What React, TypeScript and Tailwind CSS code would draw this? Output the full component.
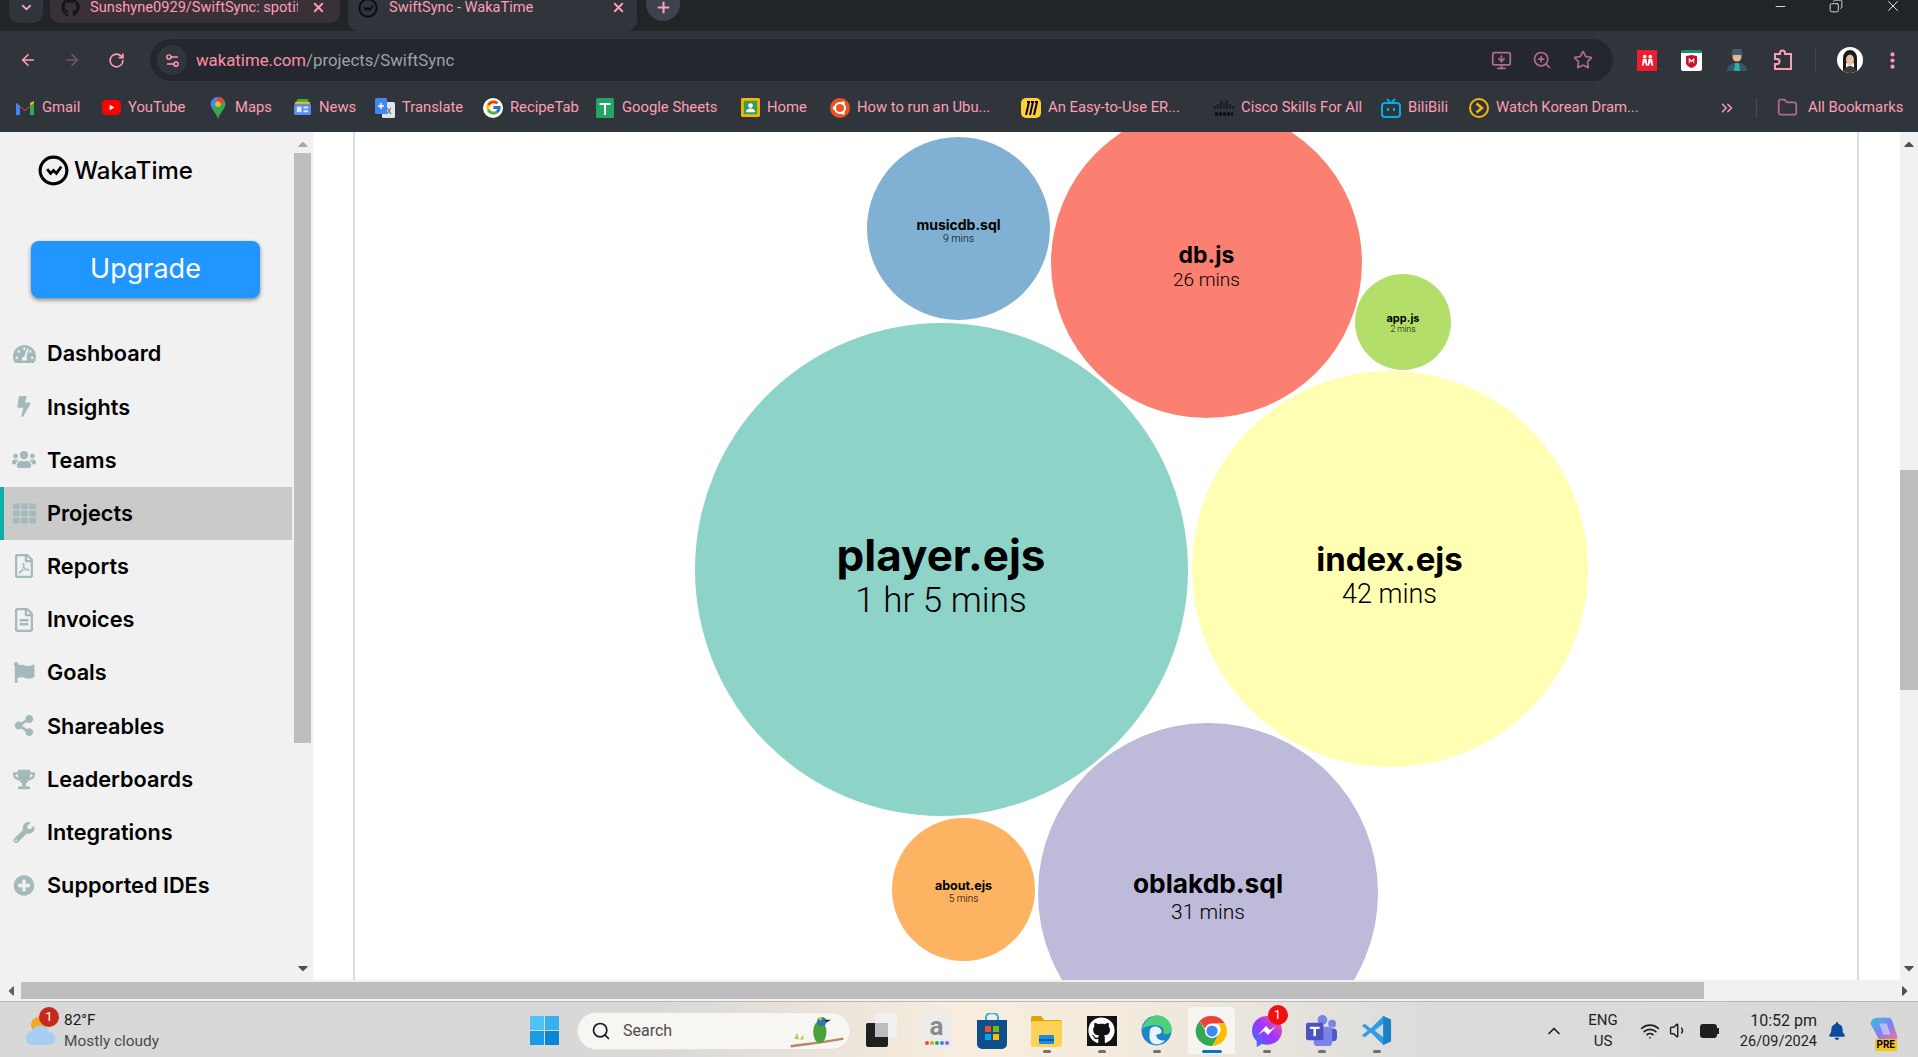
import {
  ArrowLeft,
  ArrowRight,
  RotateCw,
  Settings2,
  ZoomIn,
  Star,
  EllipsisVertical,
  Folder,
  ChevronsRight,
  ChevronDown,
  ChevronUp,
  X,
  Plus,
  Minus,
  Search,
  Wifi,
  Volume1,
  MonitorDown,
  Copy,
} from "lucide-react"
import { FcGoogle } from "react-icons/fc"
import {
  FaTachometerAlt,
  FaBolt,
  FaUsers,
  FaTh,
  FaRegFilePdf,
  FaRegFileAlt,
  FaFlag,
  FaShareAlt,
  FaTrophy,
  FaWrench,
  FaPlusCircle,
  FaGithub,
  FaBell,
  FaCaretUp,
  FaCaretDown,
  FaCaretLeft,
  FaCaretRight,
} from "react-icons/fa"

function WakaLogo({ className }: { className: string }) {
  return (
    <svg viewBox="0 0 32 32" className={className} fill="none" stroke="currentColor">
      <circle cx="16" cy="16" r="13.8" strokeWidth="3.2" />
      <path d="M9.5 14.5l3.5 4.5 3-3 3 3 5-7" strokeWidth="2.8" />
    </svg>
  )
}

function ChromeIcon({ className }: { className: string }) {
  return (
    <svg viewBox="0 0 48 48" className={className}>
      <path d="M24 4a20 20 0 0 1 17.3 10H24a10 10 0 0 0-9.4 6.6L7.6 10.5A20 20 0 0 1 24 4z" fill="#ea4335" />
      <path d="M41.3 14A20 20 0 0 1 24 44l8.7-15a10 10 0 0 0-.6-15z" fill="#fbbc04" />
      <path d="M7.6 10.5l8.7 15A10 10 0 0 0 32.7 29L24 44A20 20 0 0 1 7.6 10.5z" fill="#34a853" />
      <circle cx="24" cy="24" r="9.5" fill="#fff" />
      <circle cx="24" cy="24" r="7.5" fill="#4285f4" />
    </svg>
  )
}

const bookmarks = [
  {
    label: "Gmail",
    width: "w-[86px]",
    icon: (
      <svg viewBox="0 0 20 16" className="h-[16px] w-[20px]">
        <path d="M1 15V3l9 7 9-7v12h-4V7l-5 4-5-4v8z" fill="#ea4335" />
        <path d="M1 15V3l4 3v9z" fill="#4285f4" />
        <path d="M15 15V6l4-3v12z" fill="#34a853" />
        <path d="M15 6l4-3V1l-4 2z" fill="#fbbc04" />
      </svg>
    ),
  },
  {
    label: "YouTube",
    width: "w-[107px]",
    icon: (
      <svg viewBox="0 0 20 18" className="h-[17px] w-[19px]">
        <rect x="0" y="1" width="20" height="16" rx="4.5" fill="#ff0000" />
        <path d="M8 6l5 3-5 3z" fill="#fff" />
      </svg>
    ),
  },
  {
    label: "Maps",
    width: "w-[84px]",
    icon: (
      <svg viewBox="0 0 16 24" className="h-[22px] w-[16px]">
        <path d="M8 0a8 8 0 0 1 8 8c0 5-6 9-8 16C6 17 0 13 0 8a8 8 0 0 1 8-8z" fill="#34a853" />
        <path d="M8 0a8 8 0 0 1 6 2.7L3 13C1 11 0 9.500 0 8a8 8 0 0 1 8-8z" fill="#4285f4" />
        <path d="M8 0a8 8 0 0 1 7 4l-4 4-5-6z" fill="#ea4335" />
        <circle cx="8" cy="8" r="3" fill="#fbbc04" />
      </svg>
    ),
  },
  {
    label: "News",
    width: "w-[83px]",
    icon: (
      <svg viewBox="0 0 18 18" className="h-[17px] w-[17px]">
        <rect x="3" y="0" width="12" height="6" rx="1" fill="#34a853" />
        <rect x="1" y="3" width="16" height="4" rx="1" fill="#fbbc04" />
        <rect x="0" y="5" width="18" height="12" rx="2" fill="#5b8def" />
        <rect x="3" y="8" width="5" height="6" fill="#dfe9fb" />
        <rect x="10" y="8" width="5" height="2" fill="#dfe9fb" />
        <rect x="10" y="12" width="5" height="2" fill="#dfe9fb" />
      </svg>
    ),
  },
  {
    label: "Translate",
    width: "w-[108px]",
    icon: (
      <svg viewBox="0 0 20 20" className="h-[20px] w-[20px]">
        <rect x="7" y="4" width="13" height="16" rx="1.5" fill="#dfe3ea" />
        <rect x="0" y="0" width="12" height="16" rx="1.5" fill="#4285f4" />
        <path d="M3 8h6M6 5v6" stroke="#fff" strokeWidth="1.5" />
        <path d="M12 10l4 6M16 10l-4 6" stroke="#6b7280" strokeWidth="1.2" />
      </svg>
    ),
  },
  { label: "RecipeTab", width: "w-[112px]", icon: <span className="flex h-[20px] w-[20px] items-center justify-center rounded-full bg-white"><FcGoogle className="h-[17px] w-[17px]" /></span> },
  {
    label: "Google Sheets",
    width: "w-[145px]",
    icon: (
      <svg viewBox="0 0 18 20" className="h-[20px] w-[18px]">
        <rect width="18" height="20" rx="1.5" fill="#23a566" />
        <path d="M3.500 6h11M9 6v11" stroke="#fff" strokeWidth="2" />
      </svg>
    ),
  },
  {
    label: "Home",
    width: "w-[90px]",
    icon: (
      <svg viewBox="0 0 20 20" className="h-[19px] w-[19px]">
        <rect width="20" height="20" rx="1.5" fill="#f4b400" />
        <rect x="3" y="3" width="14" height="14" fill="#2f9e60" />
        <circle cx="10" cy="8" r="2.500" fill="#fff" />
        <path d="M5 15a5 4 0 0 1 10 0z" fill="#fff" />
      </svg>
    ),
  },
  {
    label: "How to run an Ubu...",
    width: "w-[191px]",
    icon: (
      <svg viewBox="0 0 20 20" className="h-[20px] w-[20px]">
        <circle cx="10" cy="10" r="10" fill="#e95420" />
        <circle cx="10" cy="10" r="5" fill="none" stroke="#fff" strokeWidth="2" />
        <circle cx="4.500" cy="10" r="1.800" fill="#fff" />
        <circle cx="13" cy="5" r="1.800" fill="#fff" />
        <circle cx="13" cy="15" r="1.800" fill="#fff" />
      </svg>
    ),
  },
  {
    label: "An Easy-to-Use ER...",
    width: "w-[193px]",
    icon: (
      <svg viewBox="0 0 20 20" className="h-[20px] w-[20px]">
        <rect width="20" height="20" rx="5" fill="#ffd02f" />
        <path d="M6 4l2 0-3 13M10 4l2 0-3 13M14 4l2 0-3 13" stroke="#050038" strokeWidth="2" fill="none" />
      </svg>
    ),
  },
  {
    label: "Cisco Skills For All",
    width: "w-[167px]",
    icon: (
      <svg viewBox="0 0 20 20" className="h-[20px] w-[20px]" stroke="#0c0e10" strokeWidth="1.200">
        <path d="M1 8v3M4 6v5M7 2v9M10 4v7M13 2v9M16 6v5M19 8v3" />
        <path d="M1 16h18" strokeWidth="3.500" strokeDasharray="3 1" />
      </svg>
    ),
  },
  {
    label: "BiliBili",
    width: "w-[88px]",
    icon: (
      <svg viewBox="0 0 20 20" className="h-[20px] w-[20px]" fill="none" stroke="#00aeec" strokeWidth="2">
        <rect x="1" y="5" width="18" height="14" rx="3" />
        <path d="M6 1l3 3M14 1l-3 3M7 10v3M13 10v3" />
      </svg>
    ),
  },
  {
    label: "Watch Korean Dram...",
    width: "w-[200px]",
    icon: (
      <svg viewBox="0 0 20 20" className="h-[20px] w-[20px]" fill="none" stroke="#f5b50a" strokeWidth="2">
        <circle cx="10" cy="10" r="9" />
        <path d="M7.500 5.500L13 10l-5.500 4.500" strokeWidth="2.500" />
      </svg>
    ),
  },
]

const navItems = [
  { label: "Dashboard", icon: FaTachometerAlt, size: "h-[22px] w-[23px]", active: false },
  { label: "Insights", icon: FaBolt, size: "h-[21px] w-[22px]", active: false },
  { label: "Teams", icon: FaUsers, size: "h-[23px] w-[24px]", active: false },
  { label: "Projects", icon: FaTh, size: "h-[23px] w-[23px]", active: true },
  { label: "Reports", icon: FaRegFilePdf, size: "h-[24px] w-[22px]", active: false },
  { label: "Invoices", icon: FaRegFileAlt, size: "h-[24px] w-[22px]", active: false },
  { label: "Goals", icon: FaFlag, size: "h-[21px] w-[22px]", active: false },
  { label: "Shareables", icon: FaShareAlt, size: "h-[21px] w-[22px]", active: false },
  { label: "Leaderboards", icon: FaTrophy, size: "h-[21px] w-[22px]", active: false },
  { label: "Integrations", icon: FaWrench, size: "h-[21px] w-[22px]", active: false },
  { label: "Supported IDEs", icon: FaPlusCircle, size: "h-[21px] w-[22px]", active: false },
]

// bubble chart nodes, positions are relative to the page area
const bubbles = [
  {
    name: "player.ejs",
    time: "1 hr 5 mins",
    box: "left-[381.500px] top-[190.500px] h-[493px] w-[493px] bg-[#8dd3c7] pt-[14px]",
    nameClass: "text-[44px] leading-[50px]",
    timeClass: "text-[35px] leading-[42px]",
  },
  {
    name: "index.ejs",
    time: "42 mins",
    box: "left-[878.500px] top-[239px] h-[396px] w-[396px] bg-[#ffffb3] pt-[12px]",
    nameClass: "text-[33px] leading-[38px]",
    timeClass: "text-[27px] leading-[32px]",
  },
  {
    name: "db.js",
    time: "26 mins",
    box: "left-[738px] top-[-25px] h-[311px] w-[311px] bg-[#fb8072] pt-[8px]",
    nameClass: "text-[23px] leading-[26px]",
    timeClass: "text-[19px] leading-[23px]",
  },
  {
    name: "musicdb.sql",
    time: "9 mins",
    box: "left-[554px] top-[5px] h-[183px] w-[183px] bg-[#80b1d3] pt-[4px]",
    nameClass: "text-[14px] leading-[15px]",
    timeClass: "text-[10.500px] leading-[13px]",
  },
  {
    name: "app.js",
    time: "2 mins",
    box: "left-[1042px] top-[141.500px] h-[96px] w-[96px] bg-[#b3de69] pt-[2px]",
    nameClass: "text-[11px] leading-[12px]",
    timeClass: "text-[8.500px] leading-[10px]",
  },
  {
    name: "about.ejs",
    time: "5 mins",
    box: "left-[579px] top-[686px] h-[143px] w-[143px] bg-[#fdb462] pt-[4px]",
    nameClass: "text-[12.500px] leading-[14px]",
    timeClass: "text-[10px] leading-[12px]",
  },
  {
    name: "oblakdb.sql",
    time: "31 mins",
    box: "left-[725px] top-[591px] h-[340px] w-[340px] bg-[#bebada] pt-[8px]",
    nameClass: "text-[26.300px] leading-[30px]",
    timeClass: "text-[21px] leading-[26px]",
  },
]

function TabStrip() {
  return (
    <div className="flex h-[31px] shrink-0 bg-[#212528] pl-[9px] text-[14.600px] leading-[15px] text-[#ff9db5]">
      <div className="flex h-[23px] w-[34px] items-center justify-center rounded-b-[10px] bg-[#30353c] pb-[8px]">
        <ChevronDown className="h-[15px] w-[15px]" strokeWidth={3} />
      </div>
      <div className="ml-[7px] flex h-[23px] w-[290px] items-center rounded-b-[10px] bg-[#3a3037] pb-[8px]">
        <FaGithub className="ml-[11px] h-[19px] w-[19px] text-[#14171a]" />
        <span className="ml-[10px] w-[208px] overflow-hidden whitespace-nowrap">Sunshyne0929/SwiftSync: spotify</span>
        <X className="ml-[13px] h-[15px] w-[15px]" strokeWidth={3} />
      </div>
      <div className="ml-[8px] flex h-[31px] w-[289px] items-start rounded-b-[10px] bg-[#30353c]">
        <div className="flex h-[15px] items-center">
          <WakaLogo className="ml-[10px] h-[20px] w-[20px] text-[#0b0c0e]" />
          <span className="ml-[11px] w-[222px] whitespace-nowrap">SwiftSync - WakaTime</span>
          <X className="h-[15px] w-[15px]" strokeWidth={3} />
        </div>
      </div>
      <div className="ml-[9px] flex h-[21px] w-[34px] items-center justify-center rounded-b-full bg-[#3d434c] pb-[6px]">
        <Plus className="h-[17px] w-[17px]" strokeWidth={3} />
      </div>
      <div className="ml-auto flex h-[12px] items-center text-[#e4e6e8]">
        <Minus className="mr-[41px] h-[15px] w-[15px]" strokeWidth={1.500} />
        <Copy className="mr-[41px] h-[14px] w-[14px] -scale-x-100" strokeWidth={1.500} />
        <X className="mr-[16px] h-[18px] w-[18px]" strokeWidth={1.300} />
      </div>
    </div>
  )
}

function Toolbar() {
  return (
    <div className="flex h-[54px] shrink-0 items-start bg-[#30353c] pt-[8px] text-[#ff9db5]">
      <div className="flex h-[42px] w-[150px] items-center pl-[19px]">
        <ArrowLeft className="h-[18px] w-[18px]" strokeWidth={2.300} />
        <ArrowRight className="ml-[26px] h-[18px] w-[18px] text-[#7a5366]" strokeWidth={2.300} />
        <RotateCw className="ml-[27px] h-[17px] w-[17px]" strokeWidth={2.300} />
      </div>
      <div className="flex h-[42px] w-[1463px] items-center rounded-full bg-[#24282e] pl-[7px] pr-[20px]">
        <div className="flex h-[30px] w-[30px] items-center justify-center rounded-full bg-[#30353c]">
          <Settings2 className="h-[17px] w-[17px]" strokeWidth={2} />
        </div>
        <span className="ml-[9px] mt-[1px] text-[16.800px] text-[#ff8fa8] font-[Roboto,sans-serif]">
          wakatime.com<span className="text-[#98a4a6]">/projects/SwiftSync</span>
        </span>
        <div className="ml-auto flex items-center text-[#b06c89]">
          <MonitorDown className="h-[21px] w-[21px]" strokeWidth={2} />
          <ZoomIn className="ml-[20px] h-[20px] w-[20px]" strokeWidth={2} />
          <Star className="ml-[21px] h-[20px] w-[20px]" strokeWidth={2} />
        </div>
      </div>
      <div className="flex h-[42px] items-center">
        <div className="ml-[24px] flex h-[21px] w-[20px] items-center justify-center bg-[#ed1c2e]">
          <svg viewBox="0 0 16 12" className="h-[12px] w-[15px]" fill="#fff">
            <circle cx="5" cy="2.500" r="2" />
            <circle cx="11" cy="2.500" r="2" />
            <path d="M2 12l1-7h4l1 7H6.500L5 8l-1.500 4zM8 12l1-7h4l1 7h-1.500L11 8l-1.500 4z" />
          </svg>
        </div>
        <div className="ml-[24px] flex h-[21px] w-[21px] items-center justify-center rounded-[2px] border-t-[3px] border-[#1f8a6d] bg-white">
          <svg viewBox="0 0 12 14" className="h-[13px] w-[11px]">
            <path d="M0 1l6-1 6 1v7c0 3-3 5-6 6-3-1-6-3-6-6z" fill="#c8102e" />
            <path d="M3 3l3 3 3-3v6H8V6L6 8 4 6v3H3z" fill="#fff" />
          </svg>
        </div>
        <svg viewBox="0 0 20 22" className="ml-[25px] h-[22px] w-[20px]">
          <path d="M0 22c0-6 4-8 10-8s10 2 10 8z" fill="#37566a" />
          <path d="M8 14h4l1 8H7z" fill="#28b5a0" />
          <circle cx="10" cy="8" r="4.500" fill="#e8b896" />
          <path d="M4 6l2-6h8l2 6z" fill="#455a6b" />
        </svg>
        <svg viewBox="0 0 20 22" className="ml-[26px] h-[22px] w-[20px]" fill="none" stroke="currentColor" strokeWidth="2">
          <path d="M2 5h5V4a2.500 2.500 0 0 1 5 0v1h6v15H2v-5h2a2.500 2.500 0 0 0 0-5H2z" />
        </svg>
        <div className="ml-[22px] h-[22px] w-px bg-[#454a52]" />
        <div className="ml-[21px] flex h-[26px] w-[26px] items-end justify-center overflow-hidden rounded-full bg-white">
          <svg viewBox="0 0 26 26" className="h-[26px] w-[26px]">
            <path d="M6 24V11a7 8 0 0 1 14 0v13h-3V16H9v8z" fill="#1c1917" />
            <ellipse cx="13" cy="13" rx="4" ry="5.500" fill="#e6c2a8" />
            <path d="M6 26c1-5 4-7 7-7s6 2 7 7z" fill="#3f3a3a" />
          </svg>
        </div>
        <EllipsisVertical className="ml-[19px] h-[21px] w-[21px]" strokeWidth={2.800} />
      </div>
    </div>
  )
}

function BookmarksBar() {
  return (
    <div className="flex h-[47px] shrink-0 items-center bg-[#30353c] pb-[2px] pl-[15px] text-[14.800px] text-[#ff9db5]">
      {bookmarks.map((item) => (
        <div key={item.label} className={`flex shrink-0 items-center ${item.width}`}>
          <span className="flex w-[20px] shrink-0 justify-center">{item.icon}</span>
          <span className="ml-[7px] whitespace-nowrap">{item.label}</span>
        </div>
      ))}
      <ChevronsRight className="ml-[49px] h-[18px] w-[18px]" strokeWidth={2} />
      <div className="ml-[20px] h-[20px] w-px bg-[#4b5058]" />
      <Folder className="ml-[20px] h-[21px] w-[21px] text-[#b06c89]" strokeWidth={2} />
      <span className="ml-[10px] whitespace-nowrap">All Bookmarks</span>
    </div>
  )
}

function Sidebar() {
  return (
    <aside className="flex h-full w-[313px] shrink-0 bg-[#f1f1f1]">
      <div className="flex w-[294px] shrink-0 flex-col">
        <div className="flex items-center pl-[38px] pt-[23px] text-black">
          <WakaLogo className="h-[31px] w-[31px]" />
          <span className="ml-[5px] text-[24px] font-medium leading-[31px] font-[Inter,sans-serif]">WakaTime</span>
        </div>
        <button className="ml-[31px] mt-[55px] h-[57px] w-[229px] rounded-[8px] bg-[#2196ff] text-[27px] text-white shadow-[0_2px_4px_rgba(0,0,0,0.45)] font-[Inter,sans-serif]">
          Upgrade
        </button>
        <nav className="mt-[29px] flex flex-col">
          {navItems.map((item) => {
            const Icon = item.icon
            return (
              <a
                key={item.label}
                className={`flex h-[53.200px] w-[292px] items-center text-[21.700px] font-semibold text-black font-[Inter,sans-serif] ${
                  item.active ? "border-l-4 border-[#0aafa8] bg-[#cacaca] pl-[8px]" : "pl-[12px]"
                }`}
              >
                <span className="flex w-[24px] shrink-0 justify-center">
                  <Icon className={`shrink-0 text-[#a3babb] ${item.size}`} />
                </span>
                <span className="ml-[11px]">{item.label}</span>
              </a>
            )
          })}
        </nav>
      </div>
      <div className="flex w-[17px] shrink-0 flex-col items-center">
        <FaCaretUp className="mt-[4px] h-[16px] w-[16px] text-[#a8a8a8]" />
        <div className="mt-[1px] h-[590px] w-full bg-[#bebebe]" />
        <FaCaretDown className="mt-auto mb-[4px] h-[16px] w-[16px] text-[#505050]" />
      </div>
    </aside>
  )
}

function BubbleChart() {
  return (
    <main className="relative h-full w-[1587px] shrink-0 overflow-hidden bg-white">
      <div className="ml-[40px] h-full w-[1506px] border-x-2 border-[#d5dfea]" />
      {bubbles.map((b) => (
        <div key={b.name} className={`absolute flex flex-col items-center justify-center rounded-full text-center text-black ${b.box}`}>
          <span className={`font-bold font-[Inter,sans-serif] ${b.nameClass}`}>{b.name}</span>
          <span className={`font-light font-[Roboto,sans-serif] ${b.timeClass}`}>{b.time}</span>
        </div>
      ))}
    </main>
  )
}

function PageScrollbar() {
  return (
    <div className="flex h-full w-[18px] shrink-0 flex-col items-center bg-[#f1f1f1]">
      <FaCaretUp className="mt-[4px] h-[16px] w-[16px] text-[#505050]" />
      <div className="mt-[318px] h-[220px] w-full bg-[#bebebe]" />
      <FaCaretDown className="mt-auto mb-[4px] h-[16px] w-[16px] text-[#505050]" />
    </div>
  )
}

function BottomScrollbar() {
  return (
    <div className="flex h-[21px] shrink-0 items-center bg-[#f1f1f1]">
      <FaCaretLeft className="ml-[3px] h-[16px] w-[16px] text-[#606060]" />
      <div className="ml-[2px] h-[17px] w-[1683px] bg-[#bebebe]" />
      <FaCaretRight className="ml-auto mr-[5px] h-[16px] w-[16px] text-[#505050]" />
    </div>
  )
}

function StoreIcon() {
  return (
    <svg viewBox="0 0 30 36" className="h-[36px] w-[30px]">
      <path d="M9 8V4a6 4 0 0 1 12 0v4" fill="none" stroke="#25b6e8" strokeWidth="2" />
      <path d="M0 7h30v24a5 5 0 0 1-5 5H5a5 5 0 0 1-5-5z" fill="#0f4f8c" />
      <rect x="8" y="13" width="6" height="6" fill="#f25022" />
      <rect x="16" y="13" width="6" height="6" fill="#7fba00" />
      <rect x="8" y="21" width="6" height="6" fill="#00a4ef" />
      <rect x="16" y="21" width="6" height="6" fill="#ffb900" />
    </svg>
  )
}

const taskbarApps = [
  {
    key: "taskview",
    dot: false,
    icon: (
      <div className="relative h-[36px] w-[31px]">
        <div className="absolute right-0 top-0 h-[24px] w-[22px] rounded-[2px] bg-[#f0f0f0]" />
        <div className="absolute bottom-[2px] left-0 h-[24px] w-[22px] rounded-[2px] bg-[#202020]" />
        <div className="absolute left-[9px] top-[10px] h-[14px] w-[13px] bg-[#bdbdbd]" />
      </div>
    ),
  },
  {
    key: "amazon",
    dot: false,
    icon: (
      <div className="flex h-[36px] w-[30px] flex-col items-center bg-[#ececec]">
        <span className="text-[26px] font-bold leading-[26px] text-[#8b8b8b] font-[Roboto,sans-serif]">a</span>
        <div className="mt-[2px] flex gap-[1px]">
          <span className="h-[4px] w-[4px] rounded-full bg-[#e94b3c]" />
          <span className="h-[4px] w-[4px] rounded-full bg-[#f59e0b]" />
          <span className="h-[4px] w-[4px] rounded-full bg-[#22a565]" />
          <span className="h-[4px] w-[4px] rounded-full bg-[#2f80ed]" />
          <span className="h-[4px] w-[4px] rounded-full bg-[#8b5cf6]" />
        </div>
      </div>
    ),
  },
  { key: "store", dot: false, icon: <StoreIcon /> },
  {
    key: "explorer",
    dot: true,
    icon: (
      <svg viewBox="0 0 31 32" className="h-[32px] w-[31px]">
        <path d="M0 3a2 2 0 0 1 2-2h8l3 4h16a2 2 0 0 1 2 2v4H0z" fill="#e0a206" />
        <rect x="0" y="6" width="31" height="26" rx="2" fill="#ffd257" />
        <rect x="8" y="20" width="15" height="9" rx="1" fill="#1490df" />
        <rect x="8" y="24" width="15" height="2" fill="#0a5c9c" />
      </svg>
    ),
  },
  {
    key: "github",
    dot: true,
    icon: (
      <div className="flex h-[30px] w-[30px] items-center justify-center bg-[#111214]">
        <FaGithub className="h-[27px] w-[27px] text-white" />
      </div>
    ),
  },
  {
    key: "edge",
    dot: true,
    icon: (
      <svg viewBox="0 0 32 32" className="h-[31px] w-[31px]">
        <circle cx="16" cy="16" r="15.500" fill="#1b86c9" />
        <path d="M1 15C3 5 12 0 18 .600c8 .8 13.500 7 13.500 14 0 4-4 6-8.500 5 2-4-1-9-7-9C9 10.600 3 12 1 15z" fill="#4ed07a" />
        <path d="M9 17c0-6 10-7 12-1 1 3-2 4-5 4-1 4 4 7 9 6-4 5-12 6-15 1-2-3-1-7-1-10z" fill="#e8f3fb" />
      </svg>
    ),
  },
  { key: "chrome", dot: true, icon: <ChromeIcon className="h-[36px] w-[36px]" /> },
  {
    key: "messenger",
    dot: true,
    icon: (
      <div className="relative">
        <svg viewBox="0 0 32 32" className="h-[32px] w-[32px]">
          <defs>
            <linearGradient id="msg" x1="0" y1="1" x2="1" y2="0">
              <stop offset="0" stopColor="#2a7bff" />
              <stop offset="0.5" stopColor="#a033ff" />
              <stop offset="1" stopColor="#ff5c87" />
            </linearGradient>
          </defs>
          <path d="M16 1C7.500 1 1 7.200 1 15.500c0 4.300 1.800 8 4.700 10.600V32l5.300-3a16 16 0 0 0 5 .800c8.500 0 15-6.200 15-14.300S24.500 1 16 1z" fill="url(#msg)" />
          <path d="M7 20l8-9 4 4 6-4-8 9-4-4z" fill="#fff" />
        </svg>
        <span className="absolute right-[-5px] top-[-10px] flex h-[20px] w-[20px] items-center justify-center rounded-full bg-[#f01010] text-[13px] text-white">1</span>
      </div>
    ),
  },
  {
    key: "teams",
    dot: true,
    icon: (
      <svg viewBox="0 0 32 32" className="h-[31px] w-[31px]">
        <circle cx="27" cy="9" r="4" fill="#7b83eb" />
        <circle cx="17" cy="5" r="5" fill="#7b83eb" />
        <rect x="21" y="14" width="11" height="13" rx="4" fill="#5059c9" />
        <rect x="8" y="12" width="19" height="20" rx="4" fill="#7b83eb" />
        <rect x="0" y="8" width="18" height="18" rx="2" fill="#4b53bc" />
        <path d="M4 12h10v2.500h-3.700V22H7.700v-7.500H4z" fill="#fff" />
      </svg>
    ),
  },
  {
    key: "vscode",
    dot: true,
    icon: (
      <svg viewBox="0 0 32 32" className="h-[31px] w-[31px]">
        <path d="M23 1l8 4v22l-8 4L10 18l-6 5-3-2 6-5-6-5 3-2 6 5z" fill="#2d9fe0" />
        <path d="M23 9v14l-9-7z" fill="#d8d8d8" />
        <path d="M23 1l8 4v22l-8 4z" fill="#1b80c4" />
      </svg>
    ),
  },
]

function Taskbar() {
  return (
    <div className="flex h-[56px] shrink-0 items-center border-t border-[#b8b8b8] bg-[linear-gradient(90deg,#d8d8d8_0%,#d8d8d8_34%,#f8eddd_50%,#f4ebdd_58%,#dcdcdc_74%,#d8d8d8_100%)] pt-[2px] font-[Roboto,sans-serif]">
      <div className="flex w-[530px] shrink-0 items-center pl-[25px]">
        <div className="relative h-[32px] w-[32px]">
          <svg viewBox="0 0 32 32" className="h-[32px] w-[32px]">
            <circle cx="14" cy="10" r="8" fill="#f5a623" />
            <path d="M8 30a7 7 0 0 1-1-14 9 9 0 0 1 17 1 6.500 6.500 0 0 1 0 13z" fill="#a6cdf2" />
          </svg>
          <span className="absolute left-[14px] top-[-8px] flex h-[20px] w-[20px] items-center justify-center rounded-full bg-[#c42b1c] text-[13px] text-white">1</span>
        </div>
        <div className="ml-[7px] flex flex-col text-[15.400px] leading-[21px]">
          <span className="text-[#1b1b1b]">82°F</span>
          <span className="text-[#4a4a4a]">Mostly cloudy</span>
        </div>
      </div>
      <div className="grid h-[29px] w-[29px] shrink-0 grid-cols-2 gap-[1px]">
        <span className="bg-[#4fc3f7]" />
        <span className="bg-[#38b0ee]" />
        <span className="bg-[#1a9be6]" />
        <span className="bg-[#0a84d6]" />
      </div>
      <div className="relative ml-[18px] flex h-[38px] w-[274px] shrink-0 items-center rounded-full border border-[#e3e0da] bg-[#f8f6f2] pl-[13px]">
        <Search className="h-[20px] w-[20px] text-[#1a1a1a]" strokeWidth={2} />
        <span className="ml-[12px] text-[16px] text-[#4b4b4b]">Search</span>
        <svg viewBox="0 0 60 36" className="absolute right-[3px] top-[3px] h-[34px] w-[60px]">
          <path d="M2 32c14-2 36-4 56-8" stroke="#b58a63" strokeWidth="2.500" fill="none" />
          <ellipse cx="33" cy="17" rx="7" ry="12" fill="#47a23c" />
          <circle cx="35" cy="6" r="5" fill="#2f76b6" />
          <path d="M38 4l7 0-5 3z" fill="#222" />
          <path d="M30 2l6-1-2 4z" fill="#e8c42a" />
          <path d="M6 24l3-6 2 7zM12 25l3-5 1 5z" fill="#a9cf5f" />
        </svg>
      </div>
      <div className="ml-[3px] flex h-full shrink-0">
        {taskbarApps.map((app) => (
          <div key={app.key} className="relative flex h-full w-[55px] items-center justify-center">
            {app.key === "chrome" && (
              <div className="absolute bottom-[3px] left-[4px] h-[47px] w-[47px] rounded-[4px] bg-[#f7f5f1]" />
            )}
            <div className="relative">{app.icon}</div>
            {app.dot && (
              <span
                className={`absolute bottom-[4px] h-[3px] rounded-full ${
                  app.key === "chrome" ? "w-[20px] bg-[#0a74c4]" : "w-[8px] bg-[#707070]"
                }`}
              />
            )}
          </div>
        ))}
      </div>
      <div className="ml-auto flex items-center text-[#1f1f1f]">
        <ChevronUp className="h-[20px] w-[28px]" strokeWidth={2} />
        <div className="ml-[15px] flex w-[40px] flex-col items-center text-[15px] leading-[21px]">
          <span>ENG</span>
          <span>US</span>
        </div>
        <Wifi className="ml-[17px] h-[20px] w-[20px]" strokeWidth={2} />
        <Volume1 className="ml-[9px] h-[19px] w-[19px]" strokeWidth={1.800} />
        <div className="ml-[12px] flex h-[14px] w-[20px] items-center">
          <div className="h-full w-[17px] rounded-[3px] border-2 border-[#1f1f1f] bg-[#1f1f1f]" />
          <div className="h-[6px] w-[2px] bg-[#1f1f1f]" />
        </div>
        <div className="flex w-[97px] flex-col items-end text-[14.500px] leading-[21px]">
          <span className="text-[16px]">10:52 pm</span>
          <span>26/09/2024</span>
        </div>
        <FaBell className="ml-[12px] h-[18px] w-[16px] text-[#0b4a9e]" />
        <div className="relative ml-[23px] mr-[18px] h-[32px] w-[32px]">
          <svg viewBox="0 0 32 32" className="h-[30px] w-[32px]">
            <defs>
              <linearGradient id="cop" x1="0" y1="0" x2="1" y2="1">
                <stop offset="0" stopColor="#2ec4e6" />
                <stop offset="0.55" stopColor="#8a7bf0" />
                <stop offset="1" stopColor="#f4729f" />
              </linearGradient>
            </defs>
            <path d="M9 3h11c3 0 4 1 5 4l5 15c1 3-1 5-4 5H14c-3 0-4-1-5-4L2 10c-1-4 3-7 7-7z" fill="url(#cop)" />
            <path d="M11 9h8l4 12h-8z" fill="#eef3fb" opacity="0.5" />
          </svg>
          <span className="absolute bottom-[-4px] right-[3px] rounded-[2px] bg-[#f5c518] px-[2px] text-[10px] font-bold leading-[12px] text-black">PRE</span>
        </div>
      </div>
    </div>
  )
}

export default function App() {
  return (
    <div className="flex h-[1057px] w-[1918px] flex-col overflow-hidden font-[Roboto,sans-serif]">
      <TabStrip />
      <Toolbar />
      <BookmarksBar />
      <div className="flex h-[848px] shrink-0">
        <Sidebar />
        <BubbleChart />
        <PageScrollbar />
      </div>
      <BottomScrollbar />
      <Taskbar />
    </div>
  )
}
